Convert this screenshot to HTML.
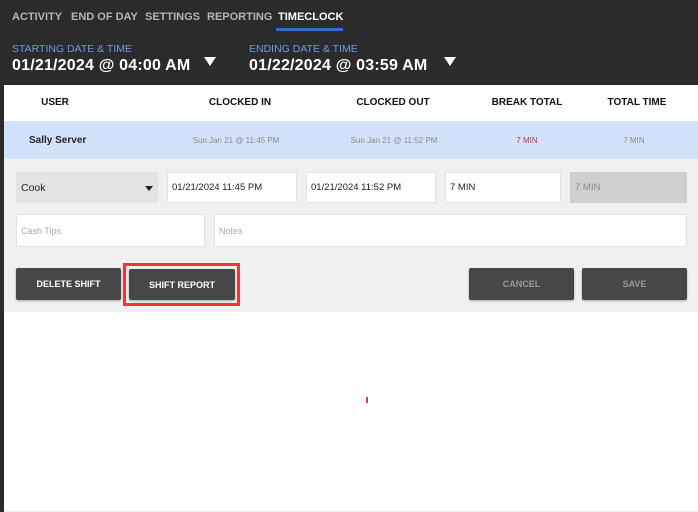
<!DOCTYPE html>
<html><head><style>
*{margin:0;padding:0;box-sizing:border-box}
body{width:698px;height:512px;background:#2b2b2b;position:relative;overflow:hidden;font-family:"Liberation Sans",sans-serif}
.a{position:absolute}
.tab{position:absolute;top:11px;font-size:11px;font-weight:bold;color:#b5b5b5}
.lbl{position:absolute;top:43px;font-size:10.5px;color:#6b9ce6}
.dt{position:absolute;top:57px;font-size:16px;font-weight:bold;color:#fff;letter-spacing:0.2px}
.tri{position:absolute;width:0;height:0;border-left:6px solid transparent;border-right:6px solid transparent;border-top:9px solid #fff}
.h{position:absolute;top:97px;font-size:10px;font-weight:bold;color:#111;text-align:center}
.c{position:absolute;top:136px;font-size:8px;color:#8a8a8a;text-align:center}
.in{position:absolute;background:#fff;border:1px solid #e2e2e2;font-size:9.5px;color:#222;padding-left:4px;display:flex;align-items:center}
.btn{position:absolute;top:268px;height:32px;background:#474747;color:#fff;font-size:9px;font-weight:bold;display:flex;align-items:center;justify-content:center;border-radius:2px;box-shadow:0 1px 2px rgba(0,0,0,.3)}
</style></head><body>
<div class="tab" style="left:12px">ACTIVITY</div>
<div class="tab" style="left:71px">END OF DAY</div>
<div class="tab" style="left:145px">SETTINGS</div>
<div class="tab" style="left:207px">REPORTING</div>
<div class="tab" style="left:278px;color:#fff">TIMECLOCK</div>
<div class="a" style="left:276px;top:28px;width:67px;height:3px;background:#2f6fd0"></div>
<div class="lbl" style="left:12px">STARTING DATE &amp; TIME</div>
<div class="lbl" style="left:249px">ENDING DATE &amp; TIME</div>
<div class="dt" style="left:12px">01/21/2024 @ 04:00 AM</div>
<div class="dt" style="left:249px">01/22/2024 @ 03:59 AM</div>
<div class="tri" style="left:204px;top:57px"></div>
<div class="tri" style="left:444px;top:57px"></div>
<div class="a" style="left:4px;top:85px;width:694px;height:427px;background:#fff;border-bottom:1px solid #eee"></div>
<div class="h" style="left:20px;width:70px">USER</div>
<div class="h" style="left:190px;width:100px">CLOCKED IN</div>
<div class="h" style="left:343px;width:100px">CLOCKED OUT</div>
<div class="h" style="left:477px;width:100px">BREAK TOTAL</div>
<div class="h" style="left:587px;width:100px">TOTAL TIME</div>
<div class="a" style="left:4px;top:121px;width:694px;height:38px;background:#d3e2fb"></div>
<div class="a" style="left:29px;top:135px;font-size:10px;font-weight:bold;color:#222">Sally Server</div>
<div class="c" style="left:176px;width:120px">Sun Jan 21 @ 11:45 PM</div>
<div class="c" style="left:334px;width:120px">Sun Jan 21 @ 11:52 PM</div>
<div class="c" style="left:477px;width:100px;color:#c0323c">7 MIN</div>
<div class="c" style="left:584px;width:100px">7 MIN</div>
<div class="a" style="left:4px;top:159px;width:694px;height:153px;background:#f0f0f0"></div>
<div class="in" style="left:16px;top:172px;width:142px;height:31px;background:#e4e4e4;border-color:#e4e4e4;font-size:10.5px">Cook<span style="position:absolute;right:4px;top:13px;border-left:4px solid transparent;border-right:4px solid transparent;border-top:5px solid #222"></span></div>
<div class="in" style="left:167px;top:172px;width:130px;height:31px">01/21/2024 11:45 PM</div>
<div class="in" style="left:306px;top:172px;width:130px;height:31px">01/21/2024 11:52 PM</div>
<div class="in" style="left:445px;top:172px;width:116px;height:31px">7 MIN</div>
<div class="in" style="left:570px;top:172px;width:117px;height:31px;background:#cfcfcf;border-color:#cfcfcf;color:#888">7 MIN</div>
<div class="in" style="left:16px;top:214px;width:189px;height:33px;color:#aaa;font-size:9px">Cash Tips</div>
<div class="in" style="left:214px;top:214px;width:473px;height:33px;color:#aaa;font-size:9px">Notes</div>
<div class="btn" style="left:16px;width:105px">DELETE SHIFT</div>
<div class="a" style="left:123px;top:263px;width:117px;height:43px;border:3px solid #f0343c"></div>
<div class="btn" style="left:129px;width:106px;top:269px;height:31px">SHIFT REPORT</div>
<div class="btn" style="left:469px;width:105px;color:#999">CANCEL</div>
<div class="btn" style="left:582px;width:105px;color:#999">SAVE</div>
<div class="a" style="left:366px;top:397px;width:2px;height:6px;background:#f0343c"></div>
</body></html>
